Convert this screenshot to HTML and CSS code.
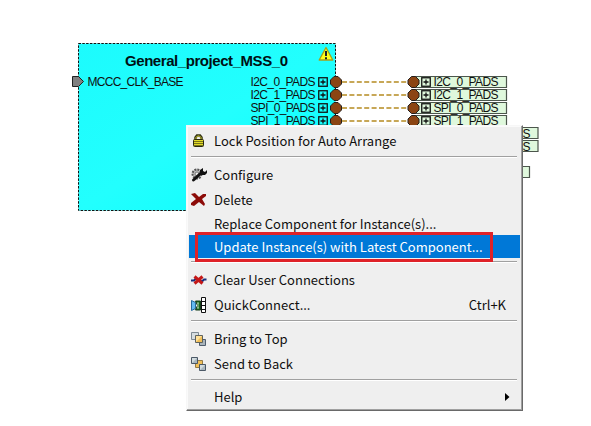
FILE: index.html
```
<!DOCTYPE html>
<html lang="en">
<head>
<meta charset="utf-8">
<title>SmartDesign canvas</title>
<link rel="stylesheet" href="styles.css">
</head>
<body>
<main class="canvas">
<svg class="diagram" width="591" height="426" viewBox="0 0 591 426">
  <defs>
    <linearGradient id="body" x1="0" y1="0" x2="1" y2="1"><stop offset="0" stop-color="#1cfbfd"/><stop offset=".5" stop-color="#22fffe"/><stop offset="1" stop-color="#08fcfe"/></linearGradient>
    <g id="plus"><rect x=".75" y=".75" width="8.5" height="8.5" fill="none" stroke="#111" stroke-width="1.3"/><path d="M2.5 5h5M5 2.5v5" stroke="#111" stroke-width="1.3"/></g>
    <path id="pin" d="M-2-5.5h4L5.5-2v4L2 5.5h-4L-5.500 2v-4z" fill="#8b4513" stroke="#26201c" stroke-width="1"/>
  </defs>
  <rect x="78.500" y="43.500" width="257" height="167" fill="url(#body)" stroke="#111" stroke-dasharray="2.500 1.300"/>
  <text class="title" x="125" y="65.500" textLength="163">General_project_MSS_0</text>
  <path d="M72.500 76.500h6l5 5-5 5h-6z" fill="#808080" stroke="#222"/>
  <text class="port" x="87.500" y="86" textLength="96">MCCC_CLK_BASE</text>
  <path d="M326 47.500l6.800 12.500h-13.600z" fill="#ffff18" stroke="#a6a018" stroke-width="1.300" stroke-linejoin="round"/>
  <path d="M326 51v5M326 57.300v2" stroke="#222" stroke-width="2"/>
  <g class="port">
    <text x="250.500" y="86" textLength="65">I2C_0_PADS</text>
    <text x="250.500" y="99" textLength="65">I2C_1_PADS</text>
    <text x="250.500" y="112" textLength="65">SPI_0_PADS</text>
    <text x="250.500" y="125" textLength="65">SPI_1_PADS</text>
  </g>
  <use href="#plus" x="318" y="77"/><use href="#plus" x="318" y="90"/><use href="#plus" x="318" y="103"/><use href="#plus" x="318" y="116"/>
  <path d="M342 82h66M342 95h66M342 108h66M342 121h66" stroke="#b58a20" stroke-width="1.600" stroke-dasharray="5 2.400"/>
  <g fill="#dff8dc" stroke="#4c564c" stroke-width="1.200">
    <path d="M414 76.500h92.500v11H414zM414 89.500h92.500v11H414zM414 102.500h92.500v11H414zM414 115.500h92.500v11H414z"/>
    <path d="M500 127.500h38v11h-38zM500 140.500h38v11h-38zM500 166.500h29.500v11H500z"/>
  </g>
  <g class="port">
    <text x="433.500" y="86" textLength="65">I2C_0_PADS</text>
    <text x="433.500" y="99" textLength="65">I2C_1_PADS</text>
    <text x="433.500" y="112" textLength="65">SPI_0_PADS</text>
    <text x="433.500" y="125" textLength="65">SPI_1_PADS</text>
    <text x="522.500" y="138">S</text><text x="522.500" y="151">S</text>
  </g>
  <use href="#plus" x="421" y="77"/><use href="#plus" x="421" y="90"/><use href="#plus" x="421" y="103"/><use href="#plus" x="421" y="116"/>
  <use href="#pin" x="336" y="82"/><use href="#pin" x="336" y="95"/><use href="#pin" x="336" y="108"/><use href="#pin" x="336" y="121"/>
  <use href="#pin" x="413.500" y="82"/><use href="#pin" x="413.500" y="95"/><use href="#pin" x="413.500" y="108"/><use href="#pin" x="413.500" y="121"/>
</svg>
<nav class="menu">
  <div class="item"><svg class="icon" viewBox="0 0 16 16"><path d="M4.500 7V4.500L6 2.500h3l1.500 2V7" fill="none" stroke="#333314" stroke-width="2.500"/><path d="M5 6.500V4.500L6.500 3h2L10 4.500v2" fill="none" stroke="#d6d432"/><rect x="2.500" y="6.500" width="10" height="7" rx="1" fill="#e2dc28" stroke="#29290d"/><path d="M3 8.500h9M3 10.500h9M3 12.500h9" stroke="#77731c"/></svg><span class="label lock">Lock Position for Auto Arrange</span></div>
  <hr>
  <div class="item"><svg class="icon" viewBox="0 0 16 16"><circle cx="6" cy="7" r="4.500" fill="#bbb" stroke="#555" stroke-width="2" stroke-dasharray="2 1"/><circle cx="6" cy="7" r="2" fill="#eee" stroke="#777"/><path d="M2.500 13L10 6" stroke="#111" stroke-width="3" stroke-linecap="round"/><path d="M9 6V3l3-2v3l2 1 2-2v3l-2 2h-4z" fill="#111"/></svg><span class="label configure">Configure</span></div>
  <div class="item"><svg class="icon" viewBox="0 0 16 16"><path d="M0 2l4-1 4 4 4-3h3v2l-4 3 3 5-1 2-5-4-5 4-3-1v-2l5-4z" fill="#8c0b08"/></svg><span class="label delete">Delete</span></div>
  <div class="item short"><i class="icon"></i><span class="label replace">Replace Component for Instance(s)...</span></div>
  <div class="item short active"><i class="icon"></i><span class="label update">Update Instance(s) with Latest Component...</span></div>
  <hr>
  <div class="item"><svg class="icon" viewBox="0 0 16 16"><path d="M0 8.500h3l2-2 6 3 2-2h2.500" fill="none" stroke="#182f7c" stroke-width="2"/><path d="M3.500 4.500l8 7M11.500 4.500l-8 7" stroke="#c41717" stroke-width="3"/></svg><span class="label clear">Clear User Connections</span></div>
  <div class="item"><svg class="icon" viewBox="0 0 16 16"><path d="M.5 3.500l4 2v6l-4 2z" fill="#63b9f0" stroke="#25699d"/><path d="M4.500 4h5v9h-5l2-4.500z" fill="#17651d" stroke="#153c19"/><path d="M6 6h2M7 6v5M6 11h2" stroke="#b2d6ae"/><path d="M10.500.5h4v15h-4zM10.500 4.500h4M10.500 8.500h4M10.500 12.500h4" fill="#fff" stroke="#111"/></svg><span class="label quick">QuickConnect...</span><span class="shortcut">Ctrl+K</span></div>
  <hr>
  <div class="item"><svg class="icon" viewBox="0 0 16 16"><path d="M.5 1.500h7v7h-7z" fill="#d6dde0" stroke="#7d8992"/><path d="M8.500 8.500h6v6h-6z" fill="#a8b3bb" stroke="#4f5c6c"/><path d="M4.500 4.500h7v7h-7z" fill="#f1bf58" stroke="#5e625e"/><path d="M5 5h6L5 11z" fill="#ffe199"/></svg><span class="label bring">Bring to Top</span></div>
  <div class="item"><svg class="icon" viewBox="0 0 16 16"><path d="M4.500 4.500h7v7h-7z" fill="#f1bf58" stroke="#947c45"/><path d="M.5 1.500h6v6h-6zM8.500 8.500h6v6h-6z" fill="#a9b7c0" stroke="#4b5866"/><path d="M1 2h5L1 7zM9 9h5l-5 5z" fill="#d2dcdf"/></svg><span class="label send">Send to Back</span></div>
  <hr>
  <div class="item short"><i class="icon"></i><span class="label help">Help</span><svg class="arrow" viewBox="0 0 5 8"><path d="M0 0l4.500 4L0 8z"/></svg></div>
</nav>
<div class="callout"></div>
</main>
</body>
</html>
```
FILE: styles.css
```
body { margin: 0; background: #fff; }
.canvas { position: relative; width: 591px; height: 426px; overflow: hidden; }
.diagram { display: block; }
.title { font: bold 15px "Liberation Sans", sans-serif; fill: #001014; }
.port { font: 12px "Liberation Sans", sans-serif; fill: #101010; }
.menu {
  position: absolute; left: 186px; top: 125px; width: 337px; height: 286px;
  box-sizing: border-box; padding: 2px 2px 0;
  background: #efefef; color: #101010;
  border: 1px solid #f7f7f7; border-right-color: #696969; border-bottom-color: #696969;
  box-shadow: inset -1px -1px #a0a0a0, inset 1px 1px #fafafa;
  font: 13px "Noto Sans CJK SC", "Noto Sans", sans-serif;
}
.item { display: flex; align-items: center; height: 25px; padding-left: 2px; white-space: nowrap; }
.short { height: 23px; }
.active { background: #0078d7; color: #fff; }
.icon { flex: none; width: 16px; height: 16px; margin-right: 7px; }
.menu hr { height: 1px; margin: 3px 3px 4px 2px; border: 0; border-bottom: 1px solid #fff; background: #a0a0a0; }
.shortcut { margin-left: auto; margin-right: 14px; }
.arrow { width: 5px; height: 8px; margin-left: auto; margin-right: 10px; }
.callout { position: absolute; left: 195px; top: 232px; width: 298px; height: 30px; box-sizing: border-box; border: 3px solid #df2228; }
```
